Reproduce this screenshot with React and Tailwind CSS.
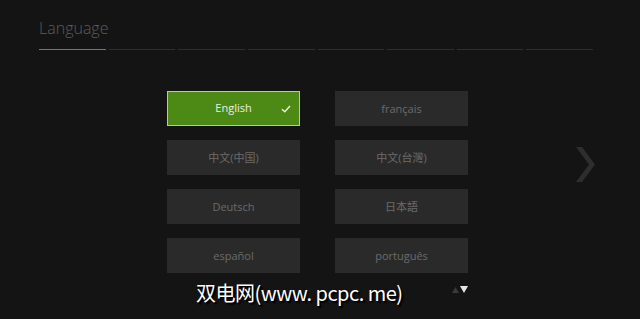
const languages = [
  { name: 'English', selected: true },
  { name: 'français' },
  { name: '中文(中国)' },
  { name: '中文(台灣)' },
  { name: 'Deutsch' },
  { name: '日本語' },
  { name: 'español' },
  { name: 'português' },
];

export default function App() {
  return (
    <div
      className="relative w-[640px] h-[319px] overflow-hidden bg-[#141414]"
      style={{ fontFamily: '"Open Sans", "Noto Sans CJK SC", sans-serif' }}
    >
      {/* Header */}
      <div className="pl-[39px] pr-[47px] pt-[16px]">
        <h1 className="text-[16px] leading-[24px] font-light text-[#5c5c5c]">Language</h1>
        <div className="mt-[9px] flex gap-[3px]">
          <div className="h-px flex-1 bg-[#5b8a4c]" />
          {[0, 1, 2, 3, 4, 5, 6].map((i) => (
            <div key={i} className="h-px flex-1 bg-[#2e2e2e]" />
          ))}
        </div>
      </div>

      {/* Language grid */}
      <div className="mt-[41px] ml-[167px] grid grid-cols-[133px_133px] gap-x-[35px] gap-y-[14px]">
        {languages.map((lang) =>
          lang.selected ? (
            <div
              key={lang.name}
              className="relative h-[35px] flex items-center justify-center bg-[#4c8a15] border border-[#b9c6b2] text-[11px] text-[#e8f0e0]"
            >
              {lang.name}
              <svg
                className="absolute right-[8px] top-[13px]"
                width="10"
                height="8"
                viewBox="0 0 10 8"
                fill="none"
                stroke="#e8f0e0"
                strokeWidth="1.5"
              >
                <path d="M1 4.2 L3.8 6.8 L9 1" />
              </svg>
            </div>
          ) : (
            <div
              key={lang.name}
              className="h-[35px] pt-px flex items-center justify-center bg-[#2a2a2a] text-[11px] text-[#6a6a6a]"
            >
              {lang.name}
            </div>
          )
        )}
      </div>

      {/* Next page arrow */}
      <svg
        className="absolute left-[575px] top-[147px]"
        width="22"
        height="36"
        viewBox="0 0 22 36"
        fill="#2e2e2e"
      >
        <path d="M1 0 L7 0 L20 17.5 L7 35 L1 35 L14 17.5 Z" />
      </svg>

      {/* Watermark */}
      <div
        className="absolute left-[196px] top-[281px] text-[20px] leading-[24px] tracking-[-0.5px] text-white"
        style={{ fontFamily: '"Noto Sans CJK SC", "DejaVu Sans", sans-serif', textShadow: '1px 1px 0 #000, 2px 2px 1px #000' }}
      >
        双电网(www. pcpc. me)
      </div>

      {/* Scroll indicator */}
      <div className="absolute left-[452px] top-[286px] flex items-center gap-[1px]">
        <svg width="7" height="6" viewBox="0 0 7 6" fill="#3a3a3a">
          <path d="M3.5 0 L7 6 L0 6 Z" />
        </svg>
        <svg width="8" height="7" viewBox="0 0 8 7" fill="#e6e6e6">
          <path d="M0 0 L8 0 L4 7 Z" />
        </svg>
      </div>
    </div>
  );
}
